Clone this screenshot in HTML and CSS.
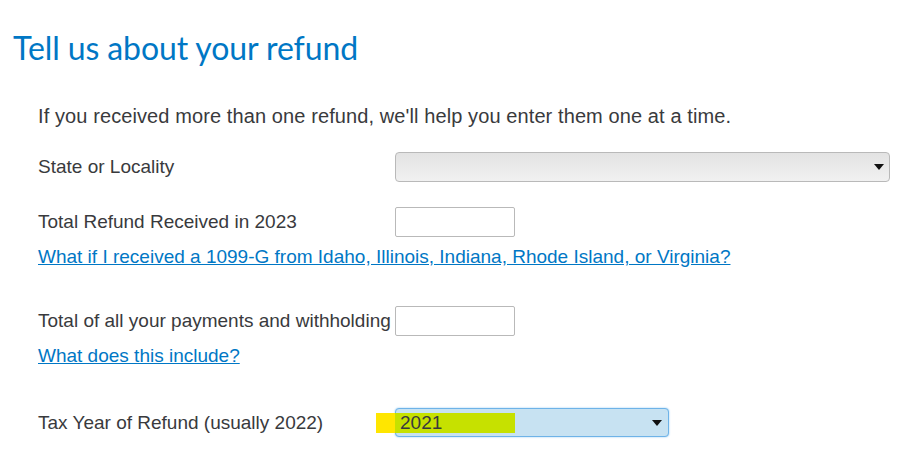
FILE: index.html
```html
<!DOCTYPE html>
<html>
<head>
<meta charset="utf-8">
<link rel="stylesheet" href="styles.css">
</head>
<body>
<h1 class="title">Tell us about your refund</h1>
<div class="content">
  <p class="intro">If you received more than one refund, we'll help you enter them one at a time.</p>
  <div class="row row-state">
    <span class="label">State or Locality</span>
    <div class="select select-wide"><span class="value"></span><span class="arrow"></span></div>
  </div>
  <div class="row row-refund">
    <span class="label">Total Refund Received in 2023</span>
    <div class="input"></div>
  </div>
  <a class="link link-1099" href="#">What if I received a 1099-G from Idaho, Illinois, Indiana, Rhode Island, or Virginia?</a>
  <div class="row row-payments">
    <span class="label">Total of all your payments and withholding</span>
    <div class="input"></div>
  </div>
  <a class="link link-include" href="#">What does this include?</a>
  <div class="row row-year">
    <span class="label">Tax Year of Refund (usually 2022)</span>
    <div class="select select-year">
      <span class="hl-yellow"></span>
      <span class="hl-lime"></span>
      <span class="value">2021</span><span class="arrow"></span>
    </div>
  </div>
</div>
</body>
</html>
```
FILE: styles.css
```css
html, body {
  margin: 0;
  padding: 0;
  background: #ffffff;
}
body {
  font-family: "Liberation Sans", Arial, sans-serif;
  color: #393a3d;
  width: 923px;
  height: 455px;
  overflow: hidden;
}
.title {
  margin: 0;
  padding: 30px 0 0 13px;
  font-family: "Lato", "Open Sans", sans-serif;
  font-weight: 400;
  font-size: 32px;
  line-height: 36px;
  letter-spacing: -0.1px;
  color: #0077c5;
}
.content {
  padding-left: 38px;
  display: flex;
  flex-direction: column;
  align-items: flex-start;
}
.intro {
  margin: 38px 0 0 0;
  font-size: 20px;
  line-height: 24px;
  letter-spacing: 0.1px;
}
.row {
  display: flex;
  align-items: center;
  font-size: 19px;
  line-height: 24px;
}
.label {
  width: 357px;
  flex: none;
  white-space: nowrap;
}
.row-state { margin-top: 24px; }
.row-refund { margin-top: 25px; }
.row-payments { margin-top: 37px; }
.row-year { margin-top: 40px; }
.select {
  position: relative;
  box-sizing: border-box;
  height: 30px;
  border: 1px solid #b9b9b9;
  border-radius: 4px;
  background: linear-gradient(#e3e3e3, #f1f1f1);
  display: flex;
  align-items: center;
  padding: 0 5px 0 4px;
}
.select-wide { width: 495px; }
.select .value {
  flex: 1;
  position: relative;
  z-index: 2;
  color: #393a3d;
}
.arrow {
  width: 0;
  height: 0;
  border-left: 5px solid transparent;
  border-right: 5px solid transparent;
  border-top: 6px solid #111;
  position: relative;
  z-index: 2;
}
.select-year {
  width: 274px;
  height: 29px;
  border: 1px solid #6eb3e8;
  background: #c7e2f2;
  box-shadow: 0 0 2px #8cc6f0;
  padding-right: 6px;
}
.hl-yellow {
  position: absolute;
  left: -20px;
  top: 4px;
  width: 20px;
  height: 20px;
  background: #ffe600;
}
.hl-lime {
  position: absolute;
  left: -1px;
  top: 4px;
  width: 120px;
  height: 20px;
  background: #c6e100;
  z-index: 1;
}
.input {
  box-sizing: border-box;
  width: 120px;
  height: 30px;
  border: 1px solid #b9b9b9;
  border-radius: 2px;
  background: #fff;
}
.link {
  font-size: 19px;
  line-height: 24px;
  color: #0077c5;
  text-decoration: underline;
}
.link-1099 { margin-top: 8px; }
.link-include { margin-top: 8px; }
```
